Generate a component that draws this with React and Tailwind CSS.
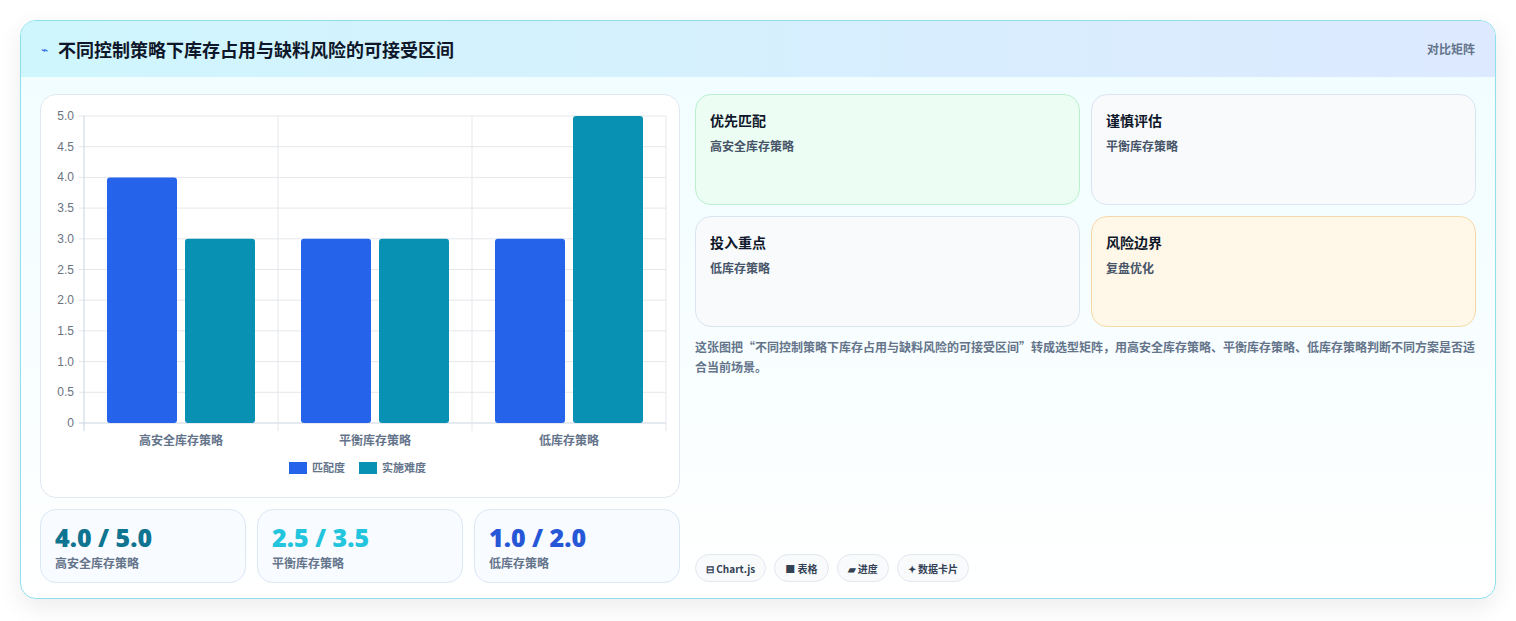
const font = { fontFamily: '"Noto Sans CJK SC", "Noto Sans", sans-serif' };

function Chart() {
  const ox = 43, oy = 21; // svg offset of plot origin relative to card
  const left = 84 - 41, top = 115 - 94, w = 582, h = 307;
  const cats = ["高安全库存策略", "平衡库存策略", "低库存策略"];
  const a = [4, 3, 3], b = [3, 3, 5];
  const ticks = [0, 0.5, 1, 1.5, 2, 2.5, 3, 3.5, 4, 4.5, 5];
  const cw = w / 3;
  const y = (v) => top + h - (v / 5) * h;
  return (
    <svg width="638" height="400" className="block">
      {ticks.map((t) => (
        <g key={t}>
          <line x1={left - 5} x2={left + w} y1={y(t)} y2={y(t)} stroke={t === 0 ? "#cbd5e1" : "#e5e7eb"} />
          <text x={left - 10} y={y(t) + 4} textAnchor="end" fontSize="12" fill="#6b7280" fontFamily="Liberation Sans, sans-serif">
            {t === 0 ? "0" : t.toFixed(1)}
          </text>
        </g>
      ))}
      {[0, 1, 2, 3].map((i) => (
        <line key={i} x1={left + i * cw} x2={left + i * cw} y1={top} y2={top + h + 8} stroke={i === 0 ? "#cbd5e1" : "#e5e7eb"} />
      ))}
      {cats.map((c, i) => {
        const cx = left + i * cw + cw / 2;
        return (
          <g key={c}>
            <rect x={cx - 74} y={y(a[i])} width="70" height={y(0) - y(a[i])} rx="3" fill="#2563eb" />
            <rect x={cx + 4} y={y(b[i])} width="70" height={y(0) - y(b[i])} rx="3" fill="#0891b2" />
            <text x={cx} y={350} textAnchor="middle" fontSize="12" fontWeight="600" fill="#64748b" style={font}>{c}</text>
          </g>
        );
      })}
      <rect x="248" y="367" width="18" height="12" fill="#2563eb" />
      <text x="271" y="377" fontSize="11" fontWeight="600" fill="#64748b" style={font}>匹配度</text>
      <rect x="318" y="367" width="18" height="12" fill="#0891b2" />
      <text x="341" y="377" fontSize="11" fontWeight="600" fill="#64748b" style={font}>实施难度</text>
    </svg>
  );
}

function Stat({ v, l, c }) {
  return (
    <div className="flex-1 rounded-2xl border border-[#dbe7f3] bg-[#f8fbff] px-[14px] pt-[12px] h-[74px]">
      <div className={`text-[25px] font-extrabold leading-[30px] ${c}`} style={{ fontFamily: '"Open Sans", sans-serif' }}>{v}</div>
      <div className="text-[12px] font-semibold text-[#64748b] mt-[2px]">{l}</div>
    </div>
  );
}

function Box({ t, s, cls }) {
  return (
    <div className={`rounded-2xl border h-[111px] px-[14px] pt-[15px] ${cls}`}>
      <div className="text-[14px] font-bold text-[#0f172a]">{t}</div>
      <div className="text-[12px] font-semibold text-[#475569] mt-[6px]">{s}</div>
    </div>
  );
}

export default function App() {
  return (
    <div className="w-[1516px] h-[621px] bg-white pt-[20px] pl-[20px]" style={font}>
      <div className="w-[1476px] h-[579px] rounded-2xl border border-[#8ee0ec] bg-gradient-to-b from-[#effdff] to-white shadow-[0_8px_24px_rgba(0,0,0,0.08)] overflow-hidden">
        <div className="h-[56px] flex items-center justify-between px-[20px] bg-gradient-to-r from-[#cff6fd] to-[#dde9ff]">
          <div className="flex items-center gap-[10px]">
            <span className="text-[#2563eb] text-[12px]">⌁</span>
            <span className="text-[18px] font-bold text-[#0f172a]">不同控制策略下库存占用与缺料风险的可接受区间</span>
          </div>
          <span className="text-[12px] font-semibold text-[#64748b]">对比矩阵</span>
        </div>
        <div className="flex gap-[15px] px-[19px] pt-[17px]">
          <div className="w-[640px] flex flex-col gap-[11px]">
            <div className="h-[404px] rounded-2xl border border-[#e2e8f0] bg-white">
              <Chart />
            </div>
            <div className="flex gap-[11px]">
              <Stat v="4.0 / 5.0" l="高安全库存策略" c="text-[#0e7490]" />
              <Stat v="2.5 / 3.5" l="平衡库存策略" c="text-[#22c5dd]" />
              <Stat v="1.0 / 2.0" l="低库存策略" c="text-[#2557d6]" />
            </div>
          </div>
          <div className="flex-1 flex flex-col h-[488px]">
            <div className="grid grid-cols-2 gap-[11px]">
              <Box t="优先匹配" s="高安全库存策略" cls="border-[#bbf0cf] bg-[#ecfdf3]" />
              <Box t="谨慎评估" s="平衡库存策略" cls="border-[#dbe5f0] bg-[#f8fafc]" />
              <Box t="投入重点" s="低库存策略" cls="border-[#dbe5f0] bg-[#f8fafc]" />
              <Box t="风险边界" s="复盘优化" cls="border-[#f5d9a8] bg-[#fff7e8]" />
            </div>
            <p className="mt-[10px] text-[12px] font-semibold leading-[20px] text-[#64748b]">
              这张图把“不同控制策略下库存占用与缺料风险的可接受区间”转成选型矩阵，用高安全库存策略、平衡库存策略、低库存策略判断不同方案是否适合当前场景。
            </p>
            <div className="mt-auto flex gap-[8px]">
              {["⊟ Chart.js", "■ 表格", "▰ 进度", "✦ 数据卡片"].map((t) => (
                <span key={t} className="h-[28px] px-[10px] flex items-center rounded-full border border-[#e2e8f0] bg-[#f8fafc] text-[10px] font-bold text-[#334155]">{t}</span>
              ))}
            </div>
          </div>
        </div>
      </div>
    </div>
  );
}
